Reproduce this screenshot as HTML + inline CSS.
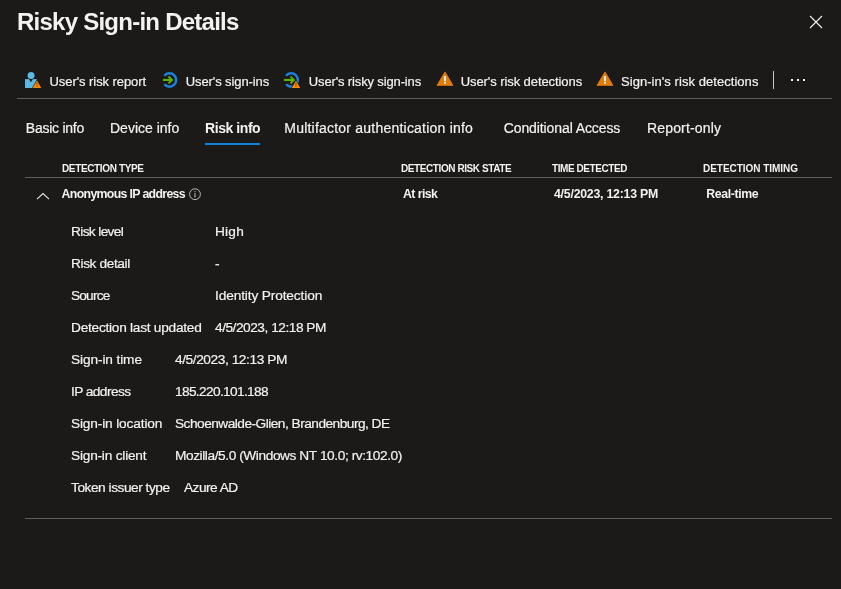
<!DOCTYPE html>
<html><head><meta charset="utf-8">
<style>
html,body{margin:0;padding:0;}
body{will-change:transform;}
body{width:841px;height:589px;background:#1b1a19;color:#f3f2f1;font-family:"Liberation Sans",sans-serif;position:relative;overflow:hidden;}
.a{position:absolute;white-space:pre;line-height:1;}
.title{font-size:24px;font-weight:bold;color:#f3f2f1;}
.tb{font-size:13px;top:75px;color:#f3f2f1;-webkit-text-stroke:0.2px #f3f2f1;}
.tab{font-size:14px;top:121px;color:#f3f2f1;-webkit-text-stroke:0.2px #f3f2f1;}
.th{font-size:10px;font-weight:bold;top:163.6px;color:#f3f2f1;}
.row{font-size:12.3px;font-weight:bold;top:188.3px;color:#f3f2f1;}
.lbl{font-size:13.7px;color:#f3f2f1;-webkit-text-stroke:0.2px #f3f2f1;}
.hr{position:absolute;height:1px;background:#605e5c;}
.dot{position:absolute;width:2px;height:2px;background:#f3f2f1;top:79px;}
svg{position:absolute;overflow:visible;}
</style></head><body>
<div class="a title" style="left:17px;top:10px;letter-spacing:-0.753px;">Risky Sign-in Details</div>
<svg style="left:809px;top:15px" width="14" height="14" viewBox="0 0 14 14"><path d="M1 1L13 13M13 1L1 13" stroke="#f3f2f1" stroke-width="1.1" fill="none"/></svg>
<!-- toolbar -->
<svg style="left:22px;top:69px" width="22" height="22" viewBox="0 0 22 22">
  <circle cx="9.05" cy="6.45" r="3.5" fill="#5bb9e3"/>
  <path d="M3 10.1H14.9V19H3Z" fill="#5bb9e3"/>
  <path d="M6.9 10.1L8.85 13.3L10.9 10.1Z" fill="#1b1a19"/>
  <path d="M9.9 19.6L15 10.1L20.1 19.6Z" fill="#1b1a19"/>
  <path d="M10.8 19L15 11.2L19.2 19Z" fill="#ff8c00"/>
  <path d="M14.5 13.5H15.5V16.2H14.5ZM14.5 16.9H15.5V17.9H14.5Z" fill="#7a4200"/>
</svg>
<div class="a tb" style="left:49.5px;letter-spacing:-0.070px;">User's risk report</div>
<svg style="left:158px;top:70px" width="22" height="22" viewBox="0 0 22 22">
  <path d="M6.41 5.73A6.65 6.65 0 1 1 6.41 14.27" stroke="#1b82da" stroke-width="2.5" fill="none"/>
  <path d="M4.9 9.95H13.8" stroke="#5db300" stroke-width="2.1" fill="none"/>
  <path d="M10.5 6.5L14 9.95L10.5 13.4" stroke="#5db300" stroke-width="1.9" fill="none"/>
</svg>
<div class="a tb" style="left:185.7px;letter-spacing:-0.092px;">User's sign-ins</div>
<svg style="left:280px;top:70px" width="22" height="22" viewBox="0 0 22 22">
  <path d="M6.1 5.73A6.65 6.65 0 1 1 6.1 14.27" stroke="#1b82da" stroke-width="2.5" fill="none"/>
  <path d="M3.9 9.95H13.8" stroke="#5db300" stroke-width="2.1" fill="none"/>
  <path d="M10.5 6.6L14 9.95L10.5 13.3" stroke="#5db300" stroke-width="1.9" fill="none"/>
  <path d="M10.9 18.5L16 9.7L21.1 18.5Z" fill="#1b1a19"/>
  <path d="M11.8 17.9L16 10.8L20.2 17.9Z" fill="#ff8c00"/>
  <path d="M15.5 12.9H16.5V15.4H15.5ZM15.5 16H16.5V17H15.5Z" fill="#7a4200"/>
</svg>
<div class="a tb" style="left:308.8px;letter-spacing:-0.139px;">User's risky sign-ins</div>
<svg style="left:434px;top:69px" width="22" height="22" viewBox="0 0 22 22">
  <path d="M11 3.3L18.7 16.3H3.3Z" fill="#e27d0b" stroke="#e27d0b" stroke-width="1.1" stroke-linejoin="round"/>
  <path d="M10.2 7.1H11.9V12.3H10.2ZM10.2 13H11.9V14.8H10.2Z" fill="#ffffff"/>
</svg>
<div class="a tb" style="left:460.7px;letter-spacing:-0.080px;">User's risk detections</div>
<svg style="left:594px;top:69px" width="22" height="22" viewBox="0 0 22 22">
  <path d="M11 3.3L18.7 16.3H3.3Z" fill="#e27d0b" stroke="#e27d0b" stroke-width="1.1" stroke-linejoin="round"/>
  <path d="M10.2 7.1H11.9V12.3H10.2ZM10.2 13H11.9V14.8H10.2Z" fill="#ffffff"/>
</svg>
<div class="a tb" style="left:621.0px;letter-spacing:0.052px;">Sign-in's risk detections</div>
<div class="hr" style="left:773px;top:71px;width:1px;height:18px;background:#c8c6c4"></div>
<div class="dot" style="left:791px"></div>
<div class="dot" style="left:797px"></div>
<div class="dot" style="left:803px"></div>
<div class="hr" style="left:17px;top:98px;width:815px;"></div>
<!-- tabs -->
<div class="a tab" style="left:25.8px;letter-spacing:-0.254px;">Basic info</div>
<div class="a tab" style="left:110.0px;letter-spacing:0.000px;">Device info</div>
<div class="a tab" style="left:205.0px;letter-spacing:-0.431px;font-weight:bold;-webkit-text-stroke:0;">Risk info</div>
<div class="hr" style="left:205px;top:143px;width:55px;height:2px;background:#1283dd"></div>
<div class="a tab" style="left:284.3px;letter-spacing:0.216px;">Multifactor authentication info</div>
<div class="a tab" style="left:503.7px;letter-spacing:-0.098px;">Conditional Access</div>
<div class="a tab" style="left:647.0px;letter-spacing:0.161px;">Report-only</div>
<!-- table header -->
<div class="a th" style="left:62.0px;letter-spacing:-0.357px;">DETECTION TYPE</div>
<div class="a th" style="left:401.0px;letter-spacing:-0.412px;">DETECTION RISK STATE</div>
<div class="a th" style="left:552.0px;letter-spacing:-0.430px;">TIME DETECTED</div>
<div class="a th" style="left:703.0px;letter-spacing:-0.033px;">DETECTION TIMING</div>
<div class="hr" style="left:25px;top:177px;width:807px;"></div>
<!-- row -->
<svg style="left:36px;top:192px" width="14" height="9" viewBox="0 0 14 9"><path d="M1 7.2L7 1.6L13 7.2" stroke="#e8e6e4" stroke-width="1.1" fill="none"/></svg>
<div class="a row" style="left:61.6px;letter-spacing:-0.653px;">Anonymous IP address</div>
<svg style="left:189px;top:188px" width="13" height="13" viewBox="0 0 13 13"><circle cx="6" cy="6.2" r="5.4" stroke="#c8c6c4" stroke-width="0.9" fill="none"/><path d="M6 5.2V9.4M6 3.2V4.2" stroke="#c8c6c4" stroke-width="1"/></svg>
<div class="a row" style="left:403.0px;letter-spacing:-0.572px;">At risk</div>
<div class="a row" style="left:554.0px;letter-spacing:-0.221px;">4/5/2023, 12:13 PM</div>
<div class="a row" style="left:706.3px;letter-spacing:-0.369px;">Real-time</div>
<!-- details -->
<div class="a lbl" style="left:71px;top:225.11px;letter-spacing:-0.637px;">Risk level</div>
<div class="a lbl" style="left:215px;top:225.11px;letter-spacing:0.224px;">High</div>
<div class="a lbl" style="left:71px;top:257.11px;letter-spacing:-0.392px;">Risk detail</div>
<div class="a lbl" style="left:215px;top:257.11px;">-</div>
<div class="a lbl" style="left:71px;top:289.11px;letter-spacing:-0.810px;">Source</div>
<div class="a lbl" style="left:215px;top:289.11px;letter-spacing:-0.128px;">Identity Protection</div>
<div class="a lbl" style="left:71px;top:321.11px;letter-spacing:-0.258px;">Detection last updated</div>
<div class="a lbl" style="left:215px;top:321.11px;letter-spacing:-0.474px;">4/5/2023, 12:18 PM</div>
<div class="a lbl" style="left:71px;top:353.11px;letter-spacing:-0.114px;">Sign-in time</div>
<div class="a lbl" style="left:175px;top:353.11px;letter-spacing:-0.421px;">4/5/2023, 12:13 PM</div>
<div class="a lbl" style="left:71px;top:385.11px;letter-spacing:-0.569px;">IP address</div>
<div class="a lbl" style="left:175px;top:385.11px;letter-spacing:-0.657px;">185.220.101.188</div>
<div class="a lbl" style="left:71px;top:417.11px;letter-spacing:-0.149px;">Sign-in location</div>
<div class="a lbl" style="left:175px;top:417.11px;letter-spacing:-0.514px;">Schoenwalde-Glien, Brandenburg, DE</div>
<div class="a lbl" style="left:71px;top:449.11px;letter-spacing:-0.216px;">Sign-in client</div>
<div class="a lbl" style="left:175px;top:449.11px;letter-spacing:-0.417px;">Mozilla/5.0 (Windows NT 10.0; rv:102.0)</div>
<div class="a lbl" style="left:71px;top:481.11px;letter-spacing:-0.463px;">Token issuer type</div>
<div class="a lbl" style="left:184px;top:481.11px;letter-spacing:-0.514px;">Azure AD</div>
<div class="hr" style="left:25px;top:518px;width:807px;"></div>
</body></html>
